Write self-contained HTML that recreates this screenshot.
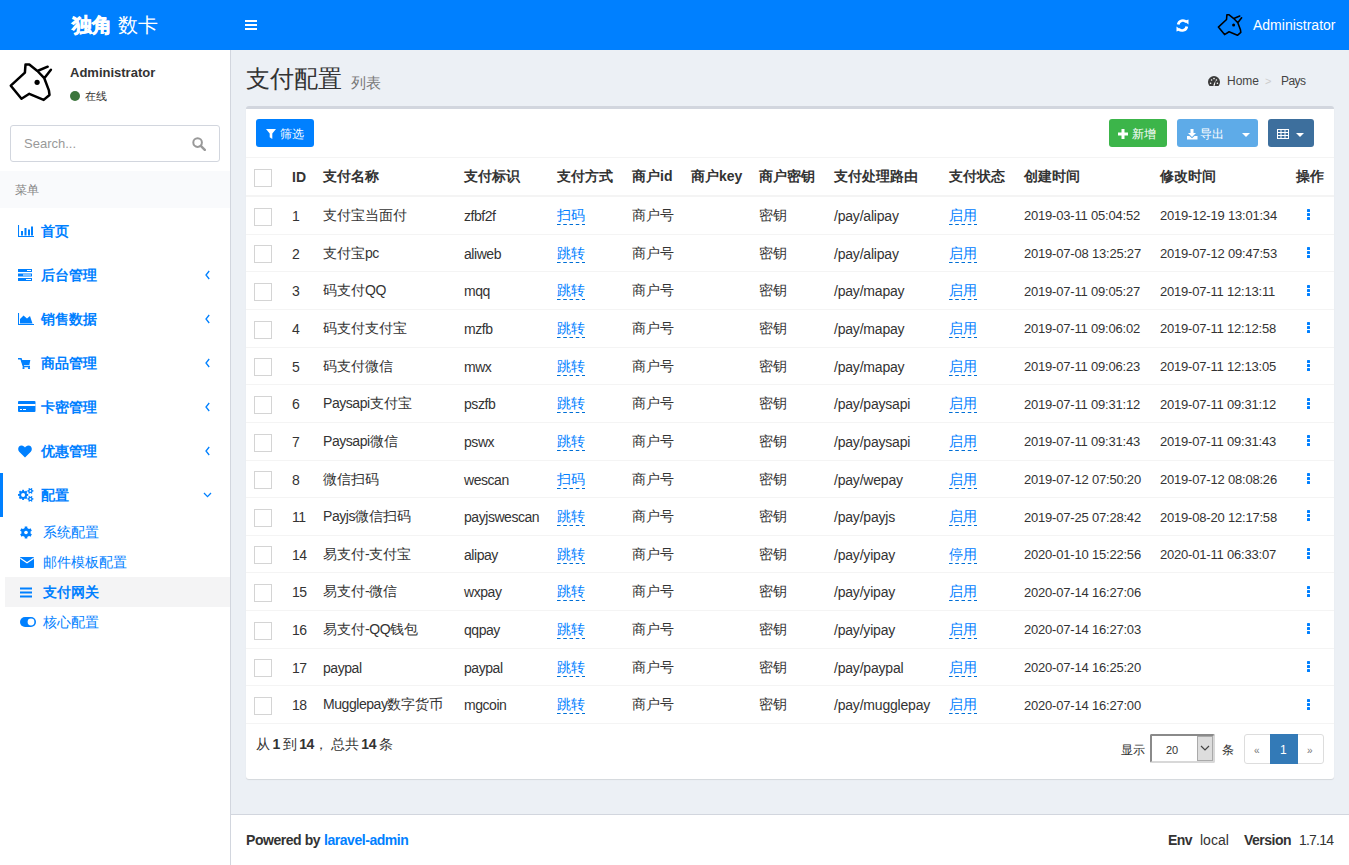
<!DOCTYPE html><html><head><meta charset="utf-8"><style>
*{box-sizing:border-box;margin:0;padding:0}
html,body{width:1349px;height:865px;overflow:hidden}
body{font-family:"Liberation Sans",sans-serif;font-size:14px;color:#333;background:#ecf0f5;position:relative}
.abs{position:absolute;white-space:nowrap}
#hdr{left:0;top:0;width:1349px;height:50px;background:#0080ff}
#logo{left:0;top:0;width:230px;height:50px;line-height:50px;text-align:center;color:#fff;font-size:20px}
#side{left:0;top:50px;width:231px;height:815px;background:#fff;border-right:1px solid #d2d6de}
#foot{left:230px;top:814px;width:1119px;height:51px;background:#fff;border-top:1px solid #d2d6de;border-left:1px solid #d2d6de}
.mi{position:absolute;left:0;width:229px;height:44px;color:#0080ff;font-weight:bold}
.mi .t{position:absolute;left:41px;top:0;line-height:44px;font-size:14px;white-space:nowrap}
.mi svg{position:absolute}
.chev{position:absolute}
.si{position:absolute;left:5px;width:225px;height:30px;color:#0080ff}
.si .t{position:absolute;left:38px;top:0;line-height:30px;font-size:14px;white-space:nowrap}
.si svg{position:absolute}
.w{color:#fff}
table{border-collapse:collapse;table-layout:fixed;position:absolute;left:246px;top:158px;width:1088px}
th,td{padding:1.5px 0 0 8px;text-align:left;vertical-align:middle;white-space:nowrap;overflow:visible}
th{height:37.64px;border-bottom:2px solid #f4f4f4;font-weight:bold;font-size:14px}
td{height:37.64px;border-top:0;border-bottom:1px solid #f4f4f4;font-size:14px}
.cb{display:inline-block;width:18px;height:18px;border:1px solid #d4d4d4;background:#fff;vertical-align:middle;position:relative;top:0.5px}
.ed{color:#0080ff;padding-bottom:2px;background:linear-gradient(to right,#006fd6 3.2px,transparent 3.2px) repeat-x left bottom/6.25px 1px}
.l{letter-spacing:-0.45px}
.dots{display:inline-block;width:3.6px;margin-left:10.6px;vertical-align:middle;position:relative;top:-2px}
.dots i{display:block;width:3.6px;height:3px;background:#0080ff;margin-bottom:1px;border-radius:0.6px}
.dt{font-size:13px;letter-spacing:-0.2px;position:relative;top:-0.7px}
.r1 td{height:38.64px}
.btn{position:absolute;height:28px;border-radius:3px;color:#fff;font-size:12px;line-height:31px;white-space:nowrap}
</style></head><body><div id="hdr" class="abs">
<div id="logo" class="abs"><b style="-webkit-text-stroke:0.7px #fff">独角</b> 数卡</div>
<svg style="left:245px;top:19px" width="12" height="12" viewBox="0 0 12 12" class="abs"><rect x="0" y="1" width="12" height="2" fill="#fff"/><rect x="0" y="5" width="12" height="2" fill="#fff"/><rect x="0" y="9" width="12" height="2" fill="#fff"/></svg>
<svg style="left:1176px;top:19px" width="13" height="13" viewBox="0 0 13 13" class="abs"><path d="M2.2,5.5 A4.6,4.6 0 0 1 10.3,3.2" fill="none" stroke="#fff" stroke-width="2.7"/><path d="M8,2 L12.5,0.5 L12.5,5.5 Z" fill="#fff"/><path d="M10.8,7.5 A4.6,4.6 0 0 1 2.7,9.8" fill="none" stroke="#fff" stroke-width="2.7"/><path d="M5,11 L0.5,12.5 L0.5,7.5 Z" fill="#fff"/></svg>
<svg class="abs" style="left:1215.2px;top:11.4px" width="30.159999999999997" height="27.839999999999996" viewBox="0 0 52 48"><path d="M20.5,6.6 L24.3,6.6 L32.4,13 L39.3,20.2 L43.9,32.4 L44.5,37 L38.7,41.9 L24.3,35.8 L16.5,40.7 L5.8,27.7 L19.9,14.7 Z M32.4,13 L42.7,8.7 M39.3,20.2 L45.9,11.8" fill="none" stroke="#000" stroke-width="2.7" stroke-linejoin="round" stroke-linecap="round"/><circle cx="32.1" cy="24.3" r="2.6" fill="#000"/></svg>
<div class="abs w" style="left:1253px;top:16px;line-height:18px;font-size:14px">Administrator</div>
</div>
<div id="side" class="abs">
</div>
<div class="abs" style="left:0;top:0"><svg class="abs" style="left:5px;top:58px" width="52.0" height="48.0" viewBox="0 0 52 48"><path d="M20.5,6.6 L24.3,6.6 L32.4,13 L39.3,20.2 L43.9,32.4 L44.5,37 L38.7,41.9 L24.3,35.8 L16.5,40.7 L5.8,27.7 L19.9,14.7 Z M32.4,13 L42.7,8.7 M39.3,20.2 L45.9,11.8" fill="none" stroke="#000" stroke-width="2.5" stroke-linejoin="round" stroke-linecap="round"/><circle cx="32.1" cy="24.3" r="2.6" fill="#000"/></svg><div class="abs" style="left:70px;top:64px;font-weight:bold;font-size:13px;line-height:17px;color:#333">Administrator</div><div class="abs" style="left:70px;top:91px;width:10px;height:10px;border-radius:50%;background:#3c763d"></div><div class="abs" style="left:85px;top:89px;font-size:11px;line-height:14px;color:#333">在线</div><div class="abs" style="left:10px;top:125px;width:210px;height:37px;border:1px solid #d2d6de;border-radius:3px;background:#fff"></div><div class="abs" style="left:24px;top:136px;font-size:13px;line-height:16px;color:#999">Search...</div><svg style="left:192px;top:137px" width="14" height="14" viewBox="0 0 14 14" class="abs"><circle cx="5.6" cy="5.6" r="4.3" fill="none" stroke="#999" stroke-width="2"/><path d="M8.8,8.8 L12.8,12.8" stroke="#999" stroke-width="2.4" stroke-linecap="round"/></svg><div class="abs" style="left:0;top:171px;width:230px;height:37px;background:#f9fafc"></div><div class="abs" style="left:15px;top:182px;font-size:12px;line-height:16px;color:#848484">菜单</div><div class="mi" style="top:209px"><span class="t">首页</span><svg style="left:18px;top:16px" width="17" height="12" viewBox="0 0 17 12" ><path d="M0.5,0 V11.5 H16" fill="none" stroke="#0080ff" stroke-width="1.1"/><rect x="3" y="6" width="2" height="4.5" fill="#0080ff"/><rect x="6.5" y="3" width="2" height="7.5" fill="#0080ff"/><rect x="10" y="4.5" width="2" height="6" fill="#0080ff"/><rect x="13" y="1.5" width="2" height="9" fill="#0080ff"/></svg></div><div class="mi" style="top:253px"><span class="t">后台管理</span><svg style="left:18px;top:16px" width="14" height="12" viewBox="0 0 14 12" ><rect x="0" y="0" width="14" height="3" fill="#0080ff"/><rect x="0" y="4.5" width="14" height="3" fill="#0080ff"/><rect x="0" y="9" width="14" height="3" fill="#0080ff"/><rect x="9" y="1" width="4" height="1" fill="#fff"/><rect x="5" y="5.5" width="8" height="1" fill="#fff"/><rect x="8" y="10" width="5" height="1" fill="#fff"/></svg><svg style="left:205px;top:17px" width="5" height="10" viewBox="0 0 5 10" class="chev"><path d="M4.2,1 L1,5 L4.2,9" fill="none" stroke="#0080ff" stroke-width="1.3"/></svg></div><div class="mi" style="top:297px"><span class="t">销售数据</span><svg style="left:18px;top:16px" width="17" height="12" viewBox="0 0 17 12" ><path d="M0.5,0 V11.5 H16" fill="none" stroke="#0080ff" stroke-width="1.1"/><path d="M2,10.5 L2,6 L5.5,2.5 L9,5.5 L12,3 L14.5,10.5 Z" fill="#0080ff"/></svg><svg style="left:205px;top:17px" width="5" height="10" viewBox="0 0 5 10" class="chev"><path d="M4.2,1 L1,5 L4.2,9" fill="none" stroke="#0080ff" stroke-width="1.3"/></svg></div><div class="mi" style="top:341px"><span class="t">商品管理</span><svg style="left:18px;top:17px" width="13" height="11" viewBox="0 0 13 11" ><path d="M0,0.8 H3 L5.5,8.5 H12" fill="none" stroke="#0080ff" stroke-width="1.6"/><path d="M3.2,2 H12.3 L11.4,7 H4.8 Z" fill="#0080ff"/><circle cx="5.5" cy="10" r="1.1" fill="#0080ff"/><circle cx="11" cy="10" r="1.1" fill="#0080ff"/></svg><svg style="left:205px;top:17px" width="5" height="10" viewBox="0 0 5 10" class="chev"><path d="M4.2,1 L1,5 L4.2,9" fill="none" stroke="#0080ff" stroke-width="1.3"/></svg></div><div class="mi" style="top:385px"><span class="t">卡密管理</span><svg style="left:18px;top:16px" width="18" height="11" viewBox="0 0 18 11" ><rect x="0" y="0" width="17.5" height="11" rx="1" fill="#0080ff"/><rect x="0" y="3" width="17.5" height="2" fill="#fff"/><rect x="2" y="8" width="2" height="1" fill="#fff"/><rect x="5" y="8" width="3" height="1" fill="#fff"/></svg><svg style="left:205px;top:17px" width="5" height="10" viewBox="0 0 5 10" class="chev"><path d="M4.2,1 L1,5 L4.2,9" fill="none" stroke="#0080ff" stroke-width="1.3"/></svg></div><div class="mi" style="top:429px"><span class="t">优惠管理</span><svg style="left:18px;top:16px" width="14" height="13" viewBox="0 0 14 13" ><path d="M7,12.5 L1.2,6.8 C-0.8,4.6 0.2,0.5 3.6,0.5 C5.2,0.5 6.3,1.5 7,2.6 C7.7,1.5 8.8,0.5 10.4,0.5 C13.8,0.5 14.8,4.6 12.8,6.8 Z" fill="#0080ff"/></svg><svg style="left:205px;top:17px" width="5" height="10" viewBox="0 0 5 10" class="chev"><path d="M4.2,1 L1,5 L4.2,9" fill="none" stroke="#0080ff" stroke-width="1.3"/></svg></div><div class="abs" style="left:0;top:473px;width:3px;height:44px;background:#0080ff"></div><div class="mi" style="top:473px"><span class="t">配置</span><svg style="left:18px;top:15px" width="16" height="15" viewBox="0 0 16 15" ><circle cx="5.1" cy="6.9" r="3.9" fill="#0080ff"/><line x1="5.1" y1="6.9" x2="10.20" y2="6.90" stroke="#0080ff" stroke-width="1.9"/><line x1="5.1" y1="6.9" x2="8.71" y2="10.51" stroke="#0080ff" stroke-width="1.9"/><line x1="5.1" y1="6.9" x2="5.10" y2="12.00" stroke="#0080ff" stroke-width="1.9"/><line x1="5.1" y1="6.9" x2="1.49" y2="10.51" stroke="#0080ff" stroke-width="1.9"/><line x1="5.1" y1="6.9" x2="0.00" y2="6.90" stroke="#0080ff" stroke-width="1.9"/><line x1="5.1" y1="6.9" x2="1.49" y2="3.29" stroke="#0080ff" stroke-width="1.9"/><line x1="5.1" y1="6.9" x2="5.10" y2="1.80" stroke="#0080ff" stroke-width="1.9"/><line x1="5.1" y1="6.9" x2="8.71" y2="3.29" stroke="#0080ff" stroke-width="1.9"/><circle cx="5.1" cy="6.9" r="2.0" fill="#fff"/><circle cx="12.4" cy="2.9" r="2.2" fill="#0080ff"/><line x1="12.4" y1="2.9" x2="15.40" y2="2.90" stroke="#0080ff" stroke-width="1.3"/><line x1="12.4" y1="2.9" x2="13.90" y2="5.50" stroke="#0080ff" stroke-width="1.3"/><line x1="12.4" y1="2.9" x2="10.90" y2="5.50" stroke="#0080ff" stroke-width="1.3"/><line x1="12.4" y1="2.9" x2="9.40" y2="2.90" stroke="#0080ff" stroke-width="1.3"/><line x1="12.4" y1="2.9" x2="10.90" y2="0.30" stroke="#0080ff" stroke-width="1.3"/><line x1="12.4" y1="2.9" x2="13.90" y2="0.30" stroke="#0080ff" stroke-width="1.3"/><circle cx="12.4" cy="2.9" r="0.9" fill="#fff"/><circle cx="12.4" cy="10.9" r="2.2" fill="#0080ff"/><line x1="12.4" y1="10.9" x2="15.40" y2="10.90" stroke="#0080ff" stroke-width="1.3"/><line x1="12.4" y1="10.9" x2="13.90" y2="13.50" stroke="#0080ff" stroke-width="1.3"/><line x1="12.4" y1="10.9" x2="10.90" y2="13.50" stroke="#0080ff" stroke-width="1.3"/><line x1="12.4" y1="10.9" x2="9.40" y2="10.90" stroke="#0080ff" stroke-width="1.3"/><line x1="12.4" y1="10.9" x2="10.90" y2="8.30" stroke="#0080ff" stroke-width="1.3"/><line x1="12.4" y1="10.9" x2="13.90" y2="8.30" stroke="#0080ff" stroke-width="1.3"/><circle cx="12.4" cy="10.9" r="0.9" fill="#fff"/></svg><svg style="left:203px;top:19px" width="9" height="6" viewBox="0 0 9 6" class="chev"><path d="M1,1 L4.5,4.6 L8,1" fill="none" stroke="#0080ff" stroke-width="1.3"/></svg></div><div class="si" style="top:517px;"><span class="t">系统配置</span><svg style="left:15px;top:9px" width="12" height="13" viewBox="0 0 12 13" ><circle cx="6" cy="6.5" r="4.6" fill="#0080ff"/><g stroke="#0080ff" stroke-width="2.6"><path d="M6,0.5 V12.5"/><path d="M0.8,3.5 L11.2,9.5"/><path d="M0.8,9.5 L11.2,3.5"/></g><circle cx="6" cy="6.5" r="1.8" fill="#fff"/></svg></div><div class="si" style="top:547px;"><span class="t">邮件模板配置</span><svg style="left:15px;top:10px" width="14" height="11" viewBox="0 0 14 11" ><rect x="0" y="0" width="14" height="11" rx="1" fill="#0080ff"/><path d="M0.3,1.2 L7,5.8 L13.7,1.2" fill="none" stroke="#fff" stroke-width="1.2"/></svg></div><div class="si" style="top:577px;background:#f4f4f5;font-weight:bold;"><span class="t">支付网关</span><svg style="left:15px;top:10px" width="12" height="11" viewBox="0 0 12 11" ><rect x="0" y="0.5" width="12" height="2" fill="#0080ff"/><rect x="0" y="4.5" width="12" height="2" fill="#0080ff"/><rect x="0" y="8.5" width="12" height="2" fill="#0080ff"/></svg></div><div class="si" style="top:607px;"><span class="t">核心配置</span><svg style="left:15px;top:10px" width="16" height="10" viewBox="0 0 16 10" ><rect x="0" y="0" width="16" height="10" rx="5" fill="#0080ff"/><circle cx="11" cy="5" r="3.4" fill="#fff"/></svg></div></div>
<div class="abs" style="left:246px;top:63px;font-size:24px;line-height:32px;color:#333">支付配置 <span style="font-size:15px;color:#777;position:relative;left:2px;top:1px">列表</span></div>
<svg style="left:1208px;top:75.8px" width="12" height="10.2" viewBox="0 0 12 10.2" class="abs"><path d="M1.5,10 A6,6 0 1 1 10.5,10 Z" fill="#3a3a3a"/><g fill="#fff"><circle cx="2.6" cy="7.2" r="0.8"/><circle cx="3.6" cy="4" r="0.8"/><circle cx="6" cy="2.6" r="0.8"/><circle cx="8.4" cy="4" r="0.8"/><circle cx="9.4" cy="7.2" r="0.8"/><path d="M5.2,9.5 L7.6,4.2 L6.8,9.8 Z"/></g></svg>
<div class="abs" style="left:1227px;top:74px;font-size:12px;line-height:15px;color:#444">Home</div>
<div class="abs" style="left:1265px;top:74px;font-size:11px;line-height:15px;color:#ccc">&gt;</div>
<div class="abs" style="left:1281px;top:74px;font-size:12px;line-height:15px;color:#444;letter-spacing:-0.6px">Pays</div>
<div class="abs" style="left:246px;top:106px;width:1088px;height:673px;background:#fff;border-top:3px solid #d2d6de;border-radius:3px;box-shadow:0 1px 1px rgba(0,0,0,0.1)"></div>
<div class="abs" style="left:246px;top:157px;width:1088px;height:1px;background:#f4f4f4"></div>
<div class="btn" style="left:256px;top:119px;width:58px;background:#0080ff"><svg style="left:10px;top:10px" width="10" height="10" viewBox="0 0 10 10" class="abs"><path d="M0,0 H10 L6.3,4.5 V10 L3.7,8.2 V4.5 Z" fill="#fff"/></svg><span class="abs" style="left:24px;top:0">筛选</span></div>
<div class="btn" style="left:1109px;top:119px;width:58px;background:#3cb54a"><svg style="left:9px;top:10px" width="10" height="10" viewBox="0 0 10 10" class="abs"><path d="M3.5,0 H6.5 V3.5 H10 V6.5 H6.5 V10 H3.5 V6.5 H0 V3.5 H3.5 Z" fill="#fff"/></svg><span class="abs" style="left:23px;top:0">新增</span></div>
<div class="btn" style="left:1177px;top:119px;width:81px;background:#5eabe8"><svg style="left:10px;top:9.5px" width="11" height="11" viewBox="0 0 11 11" class="abs"><path d="M3.5,0 H6.5 V4 H9 L5,8 L1,4 H3.5 Z" fill="#fff"/><path d="M0,7 H2.5 L5,9.3 L7.5,7 H10.5 V10.5 H0 Z" fill="#fff"/></svg><span class="abs" style="left:23px;top:0">导出</span><svg style="left:65px;top:13.5px" width="8" height="4" viewBox="0 0 8 4" class="abs"><path d="M0,0 H8 L4,4 Z" fill="#fff"/></svg></div>
<div class="btn" style="left:1268px;top:119px;width:46px;background:#3d6f9d"><svg style="left:9px;top:9.5px" width="12" height="10" viewBox="0 0 12 10" class="abs"><rect x="0.5" y="0.5" width="11" height="9" fill="none" stroke="#fff" stroke-width="1"/><g stroke="#fff" stroke-width="1"><path d="M0.5,3.5 H11.5 M0.5,6.5 H11.5 M4,0.5 V9.5 M8,0.5 V9.5"/></g></svg><svg style="left:28px;top:13.5px" width="8" height="4" viewBox="0 0 8 4" class="abs"><path d="M0,0 H8 L4,4 Z" fill="#fff"/></svg></div>
<table><colgroup><col style="width:38px"><col style="width:31px"><col style="width:141px"><col style="width:93px"><col style="width:75px"><col style="width:59px"><col style="width:68px"><col style="width:75px"><col style="width:115px"><col style="width:75px"><col style="width:136px"><col style="width:136px"><col style="width:46px"></colgroup><tr><th><span class="cb"></span></th><th>ID</th><th>支付名称</th><th>支付标识</th><th>支付方式</th><th>商户id</th><th>商户key</th><th>商户密钥</th><th>支付处理路由</th><th>支付状态</th><th>创建时间</th><th>修改时间</th><th>操作</th></tr><tr class="r1"><td><span class="cb"></span></td><td><span class="l">1</span></td><td>支付宝当面付</td><td><span class="l">zfbf2f</span></td><td><span class="ed">扫码</span></td><td>商户号</td><td></td><td>密钥</td><td><span style="letter-spacing:-0.2px">/pay/alipay</span></td><td><span class="ed">启用</span></td><td><span class="dt">2019-03-11 05:04:52</span></td><td><span class="dt">2019-12-19 13:01:34</span></td><td><span class="dots"><i></i><i></i><i></i></span></td></tr><tr><td><span class="cb"></span></td><td><span class="l">2</span></td><td>支付宝<span class="l">pc</span></td><td><span class="l">aliweb</span></td><td><span class="ed">跳转</span></td><td>商户号</td><td></td><td>密钥</td><td><span style="letter-spacing:-0.2px">/pay/alipay</span></td><td><span class="ed">启用</span></td><td><span class="dt">2019-07-08 13:25:27</span></td><td><span class="dt">2019-07-12 09:47:53</span></td><td><span class="dots"><i></i><i></i><i></i></span></td></tr><tr><td><span class="cb"></span></td><td><span class="l">3</span></td><td>码支付<span class="l">QQ</span></td><td><span class="l">mqq</span></td><td><span class="ed">跳转</span></td><td>商户号</td><td></td><td>密钥</td><td><span style="letter-spacing:-0.2px">/pay/mapay</span></td><td><span class="ed">启用</span></td><td><span class="dt">2019-07-11 09:05:27</span></td><td><span class="dt">2019-07-11 12:13:11</span></td><td><span class="dots"><i></i><i></i><i></i></span></td></tr><tr><td><span class="cb"></span></td><td><span class="l">4</span></td><td>码支付支付宝</td><td><span class="l">mzfb</span></td><td><span class="ed">跳转</span></td><td>商户号</td><td></td><td>密钥</td><td><span style="letter-spacing:-0.2px">/pay/mapay</span></td><td><span class="ed">启用</span></td><td><span class="dt">2019-07-11 09:06:02</span></td><td><span class="dt">2019-07-11 12:12:58</span></td><td><span class="dots"><i></i><i></i><i></i></span></td></tr><tr><td><span class="cb"></span></td><td><span class="l">5</span></td><td>码支付微信</td><td><span class="l">mwx</span></td><td><span class="ed">跳转</span></td><td>商户号</td><td></td><td>密钥</td><td><span style="letter-spacing:-0.2px">/pay/mapay</span></td><td><span class="ed">启用</span></td><td><span class="dt">2019-07-11 09:06:23</span></td><td><span class="dt">2019-07-11 12:13:05</span></td><td><span class="dots"><i></i><i></i><i></i></span></td></tr><tr><td><span class="cb"></span></td><td><span class="l">6</span></td><td><span class="l">Paysapi</span>支付宝</td><td><span class="l">pszfb</span></td><td><span class="ed">跳转</span></td><td>商户号</td><td></td><td>密钥</td><td><span style="letter-spacing:-0.2px">/pay/paysapi</span></td><td><span class="ed">启用</span></td><td><span class="dt">2019-07-11 09:31:12</span></td><td><span class="dt">2019-07-11 09:31:12</span></td><td><span class="dots"><i></i><i></i><i></i></span></td></tr><tr><td><span class="cb"></span></td><td><span class="l">7</span></td><td><span class="l">Paysapi</span>微信</td><td><span class="l">pswx</span></td><td><span class="ed">跳转</span></td><td>商户号</td><td></td><td>密钥</td><td><span style="letter-spacing:-0.2px">/pay/paysapi</span></td><td><span class="ed">启用</span></td><td><span class="dt">2019-07-11 09:31:43</span></td><td><span class="dt">2019-07-11 09:31:43</span></td><td><span class="dots"><i></i><i></i><i></i></span></td></tr><tr><td><span class="cb"></span></td><td><span class="l">8</span></td><td>微信扫码</td><td><span class="l">wescan</span></td><td><span class="ed">扫码</span></td><td>商户号</td><td></td><td>密钥</td><td><span style="letter-spacing:-0.2px">/pay/wepay</span></td><td><span class="ed">启用</span></td><td><span class="dt">2019-07-12 07:50:20</span></td><td><span class="dt">2019-07-12 08:08:26</span></td><td><span class="dots"><i></i><i></i><i></i></span></td></tr><tr><td><span class="cb"></span></td><td><span class="l">11</span></td><td><span class="l">Payjs</span>微信扫码</td><td><span class="l">payjswescan</span></td><td><span class="ed">跳转</span></td><td>商户号</td><td></td><td>密钥</td><td><span style="letter-spacing:-0.2px">/pay/payjs</span></td><td><span class="ed">启用</span></td><td><span class="dt">2019-07-25 07:28:42</span></td><td><span class="dt">2019-08-20 12:17:58</span></td><td><span class="dots"><i></i><i></i><i></i></span></td></tr><tr><td><span class="cb"></span></td><td><span class="l">14</span></td><td>易支付<span class="l">-</span>支付宝</td><td><span class="l">alipay</span></td><td><span class="ed">跳转</span></td><td>商户号</td><td></td><td>密钥</td><td><span style="letter-spacing:-0.2px">/pay/yipay</span></td><td><span class="ed">停用</span></td><td><span class="dt">2020-01-10 15:22:56</span></td><td><span class="dt">2020-01-11 06:33:07</span></td><td><span class="dots"><i></i><i></i><i></i></span></td></tr><tr><td><span class="cb"></span></td><td><span class="l">15</span></td><td>易支付<span class="l">-</span>微信</td><td><span class="l">wxpay</span></td><td><span class="ed">跳转</span></td><td>商户号</td><td></td><td>密钥</td><td><span style="letter-spacing:-0.2px">/pay/yipay</span></td><td><span class="ed">启用</span></td><td><span class="dt">2020-07-14 16:27:06</span></td><td><span class="dt"></span></td><td><span class="dots"><i></i><i></i><i></i></span></td></tr><tr><td><span class="cb"></span></td><td><span class="l">16</span></td><td>易支付<span class="l">-QQ</span>钱包</td><td><span class="l">qqpay</span></td><td><span class="ed">跳转</span></td><td>商户号</td><td></td><td>密钥</td><td><span style="letter-spacing:-0.2px">/pay/yipay</span></td><td><span class="ed">启用</span></td><td><span class="dt">2020-07-14 16:27:03</span></td><td><span class="dt"></span></td><td><span class="dots"><i></i><i></i><i></i></span></td></tr><tr><td><span class="cb"></span></td><td><span class="l">17</span></td><td><span class="l">paypal</span></td><td><span class="l">paypal</span></td><td><span class="ed">跳转</span></td><td>商户号</td><td></td><td>密钥</td><td><span style="letter-spacing:-0.2px">/pay/paypal</span></td><td><span class="ed">启用</span></td><td><span class="dt">2020-07-14 16:25:20</span></td><td><span class="dt"></span></td><td><span class="dots"><i></i><i></i><i></i></span></td></tr><tr><td><span class="cb"></span></td><td><span class="l">18</span></td><td><span class="l">Mugglepay</span>数字货币</td><td><span class="l">mgcoin</span></td><td><span class="ed">跳转</span></td><td>商户号</td><td></td><td>密钥</td><td><span style="letter-spacing:-0.2px">/pay/mugglepay</span></td><td><span class="ed">启用</span></td><td><span class="dt">2020-07-14 16:27:00</span></td><td><span class="dt"></span></td><td><span class="dots"><i></i><i></i><i></i></span></td></tr></table>
<div class="abs" style="left:256px;top:736px;font-size:14px;line-height:17px;color:#333;word-spacing:-1.3px">从 <b style="letter-spacing:-0.4px">1</b> 到 <b style="letter-spacing:-0.4px">14</b>，&#8201;总共 <b style="letter-spacing:-0.4px">14</b> 条</div>
<div class="abs" style="left:1121px;top:742px;font-size:12px;line-height:16px;color:#333">显示</div>
<div class="abs" style="left:1150px;top:734px;width:65px;height:29px;border-top:2px solid #8a8a8a;border-left:2px solid #8a8a8a;border-right:2px solid #d8d8d8;border-bottom:2px solid #d8d8d8;border-radius:2px;background:#fff"></div>
<div class="abs" style="left:1166px;top:743px;font-size:11px;line-height:15px;color:#333">20</div>
<div class="abs" style="left:1197px;top:736px;width:16px;height:25px;background:#ddd;border:1px solid #aaa"></div>
<svg style="left:1200px;top:745px" width="10" height="6" viewBox="0 0 10 6" class="abs"><path d="M1,1 L5,5 L9,1" fill="none" stroke="#444" stroke-width="1.2"/></svg>
<div class="abs" style="left:1222px;top:742px;font-size:12px;line-height:16px;color:#333">条</div>
<div class="abs" style="left:1244px;top:734px;width:80px;height:30px;border:1px solid #ddd;border-radius:3px;background:#fff"></div>
<div class="abs" style="left:1270px;top:734px;width:28px;height:30px;background:#337ab7"></div>
<div class="abs" style="left:1254px;top:743px;font-size:10px;line-height:15px;color:#777">&laquo;</div>
<div class="abs" style="left:1280px;top:743px;font-size:12px;line-height:15px;color:#fff">1</div>
<div class="abs" style="left:1307px;top:743px;font-size:10px;line-height:15px;color:#777">&raquo;</div>
<div id="foot" class="abs"></div>
<div class="abs" style="left:246px;top:832px;font-size:14px;line-height:17px;color:#333"><b style="letter-spacing:-0.45px">Powered by</b> <b style="color:#0080ff;letter-spacing:-0.45px">laravel-admin</b></div>
<div class="abs" style="left:1168px;top:832px;font-size:14px;line-height:17px;color:#333"><b style="letter-spacing:-0.6px">Env</b></div>
<div class="abs" style="left:1200px;top:832px;font-size:14px;line-height:17px;color:#333">local</div>
<div class="abs" style="left:1244px;top:832px;font-size:14px;line-height:17px;color:#333"><b style="letter-spacing:-0.5px">Version</b></div>
<div class="abs" style="left:1299px;top:832px;font-size:14px;line-height:17px;color:#333;letter-spacing:-0.8px">1.7.14</div></body></html>
